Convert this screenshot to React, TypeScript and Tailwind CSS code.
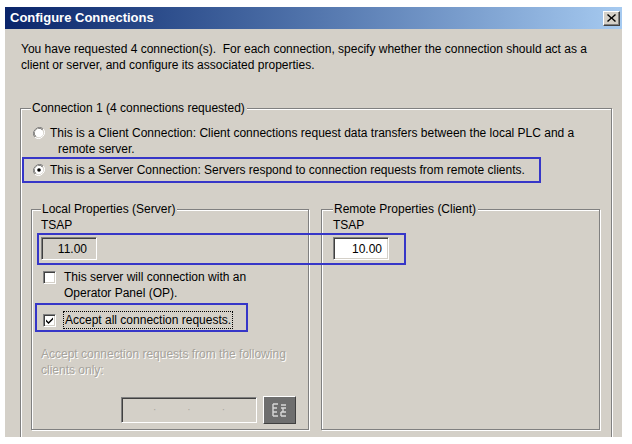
import type { ReactNode } from 'react'

const sunken =
  'border border-t-[#808080] border-l-[#808080] border-b-white border-r-white shadow-[inset_1px_1px_0_#404040,inset_-1px_-1px_0_#d4d0c8]'

function Radio({ checked }: { checked?: boolean }) {
  return (
    <svg width="12" height="12" viewBox="0 0 12 12" className="shrink-0">
      <path d="M10.2 1.8A6 6 0 0 0 1.8 10.2" fill="none" stroke="#808080" strokeWidth="1" />
      <path d="M9.4 2.6A4.9 4.9 0 0 0 2.6 9.4" fill="none" stroke="#404040" strokeWidth="1" />
      <path d="M1.8 10.2A6 6 0 0 0 10.2 1.8" fill="none" stroke="#ffffff" strokeWidth="1" />
      <circle cx="6" cy="6" r="4.3" fill="#ffffff" />
      {checked && <circle cx="6" cy="6" r="1.8" fill="#000000" />}
    </svg>
  )
}

function Checkbox({ checked }: { checked?: boolean }) {
  return (
    <span className={`flex h-[13px] w-[13px] shrink-0 items-center justify-center bg-white ${sunken}`}>
      {checked && (
        <svg width="9" height="9" viewBox="0 0 9 9">
          <path d="M1 3.5 L3.5 6 L8 1.5 L8 3.5 L3.5 8 L1 5.5 Z" fill="#000" />
        </svg>
      )}
    </span>
  )
}

function Group({ title, className, children }: { title: string; className?: string; children: ReactNode }) {
  return (
    <fieldset
      className={`border border-[#808080] shadow-[1px_1px_0_#fff,inset_1px_1px_0_#fff] ${className ?? ''}`}
    >
      <legend className="bg-[#d4d0c8] pl-[1px] pr-[2px] leading-4">{title}</legend>
      {children}
    </fieldset>
  )
}

export default function App() {
  return (
    <div className="relative h-[444px] w-[632px] overflow-hidden bg-white font-['Liberation_Sans',Arial,sans-serif] text-[12px] leading-4 text-black">
      <div className="ml-[5px] mt-[7px] h-[430px] w-[617px] overflow-hidden bg-[#d4d0c8]">
        {/* title bar */}
        <div className="flex h-[22px] items-center justify-between bg-gradient-to-r from-[#0a246a] to-[#a6caf0] pl-[5px] pr-[2px]">
          <span className="text-[13px] font-bold text-white">Configure Connections</span>
          <span className="flex h-[15px] w-[17px] items-center justify-center border border-t-white border-l-white border-b-[#404040] border-r-[#404040] bg-[#d4d0c8] shadow-[inset_-1px_-1px_0_#808080]">
            <svg width="9" height="8" viewBox="0 0 9 8">
              <path d="M1 0 L4.5 3.2 L8 0 L9 1 L5.6 4 L9 7 L8 8 L4.5 4.8 L1 8 L0 7 L3.4 4 L0 1 Z" fill="#000" />
            </svg>
          </span>
        </div>

        <p className="px-[16px] pt-[12px]">
          You have requested 4 connection(s).&nbsp; For each connection, specify whether the connection should act as a
          <br />
          client or server, and configure its associated properties.
        </p>

        <Group title="Connection 1 (4 connections requested)" className="ml-[15px] mr-[10px] mt-[27px] h-[400px] px-[10px] pt-[9px]">
          <div className="flex items-start gap-[5px] pl-[2px]">
            <span className="mt-[2px]">
              <Radio />
            </span>
            <div>
              <div className="whitespace-nowrap">
                This is a Client Connection: Client connections request data transfers between the local PLC and a
              </div>
              <div className="pl-[8px]">remote server.</div>
            </div>
          </div>
          <div className="mt-[5px] flex items-start gap-[5px] pl-[2px]">
            <span className="mt-[2px]">
              <Radio checked />
            </span>
            <div className="whitespace-nowrap">
              This is a Server Connection: Servers respond to connection requests from remote clients.
            </div>
          </div>

          <div className="mt-[23px] flex gap-[12px]">
            <Group title="Local Properties (Server)" className="h-[229px] w-[278px] px-[9px]">
              <div>TSAP</div>
              <div className={`mt-[4px] flex h-[23px] w-[56px] items-center justify-end bg-[#d4d0c8] pr-[9px] ${sunken}`}>
                11.00
              </div>
              <div className="mt-[9px] flex items-start gap-[8px] pl-[2px]">
                <span className="mt-[2px]">
                  <Checkbox />
                </span>
                <div>
                  This server will connection with an
                  <br />
                  Operator Panel (OP).
                </div>
              </div>
              <div className="mt-[10px] flex items-center gap-[7px] pl-[2px]">
                <Checkbox checked />
                <span className="border border-dotted border-black px-[1px]">Accept all connection requests.</span>
              </div>
              <div className="mt-[17px] whitespace-nowrap text-[#a6a39c] [text-shadow:1px_1px_0_#fff]">
                Accept connection requests from the following
                <br />
                clients only:
              </div>
              <div className="mt-[18px] flex items-center justify-end gap-[6px] pr-[3px]">
                <div className={`flex h-[26px] w-[136px] items-center bg-[#d4d0c8] text-[#a8a59e] ${sunken}`}>
                  <span className="flex-1" />
                  <span className="text-[10px]">·</span>
                  <span className="flex-1" />
                  <span className="text-[10px]">·</span>
                  <span className="flex-1" />
                  <span className="text-[10px]">·</span>
                  <span className="flex-1" />
                </div>
                <div className="flex h-[28px] w-[33px] items-center justify-center border border-t-white border-l-white border-b-[#404040] border-r-[#404040] bg-[#6e6e6e]">
                  <svg width="16" height="14" viewBox="0 0 16 14">
                    <path d="M1 1h5M1 1v12M1 5h4M1 9h4M1 13h5" stroke="#d8d8d8" strokeWidth="1.4" fill="none" />
                    <path d="M9 2h5M9 5h5M11 5v4M9 9h5M9 13h5M9 9v4" stroke="#d8d8d8" strokeWidth="1.4" fill="none" />
                  </svg>
                </div>
              </div>
            </Group>
            <Group title="Remote Properties (Client)" className="h-[229px] w-[279px] px-[11px]">
              <div>TSAP</div>
              <div className={`mt-[4px] flex h-[23px] w-[56px] items-center justify-end bg-white pr-[6px] ${sunken}`}>
                10.00
              </div>
            </Group>
          </div>
        </Group>
      </div>

      {/* blue annotation frames */}
      <div className="absolute left-[22px] top-[157px] h-[26px] w-[519px] border-2 border-[#3636c8]" />
      <div className="absolute left-[37px] top-[233px] h-[32px] w-[369px] border-2 border-[#3636c8]" />
      <div className="absolute left-[35px] top-[303px] h-[29px] w-[213px] border-2 border-[#3636c8]" />
    </div>
  )
}
